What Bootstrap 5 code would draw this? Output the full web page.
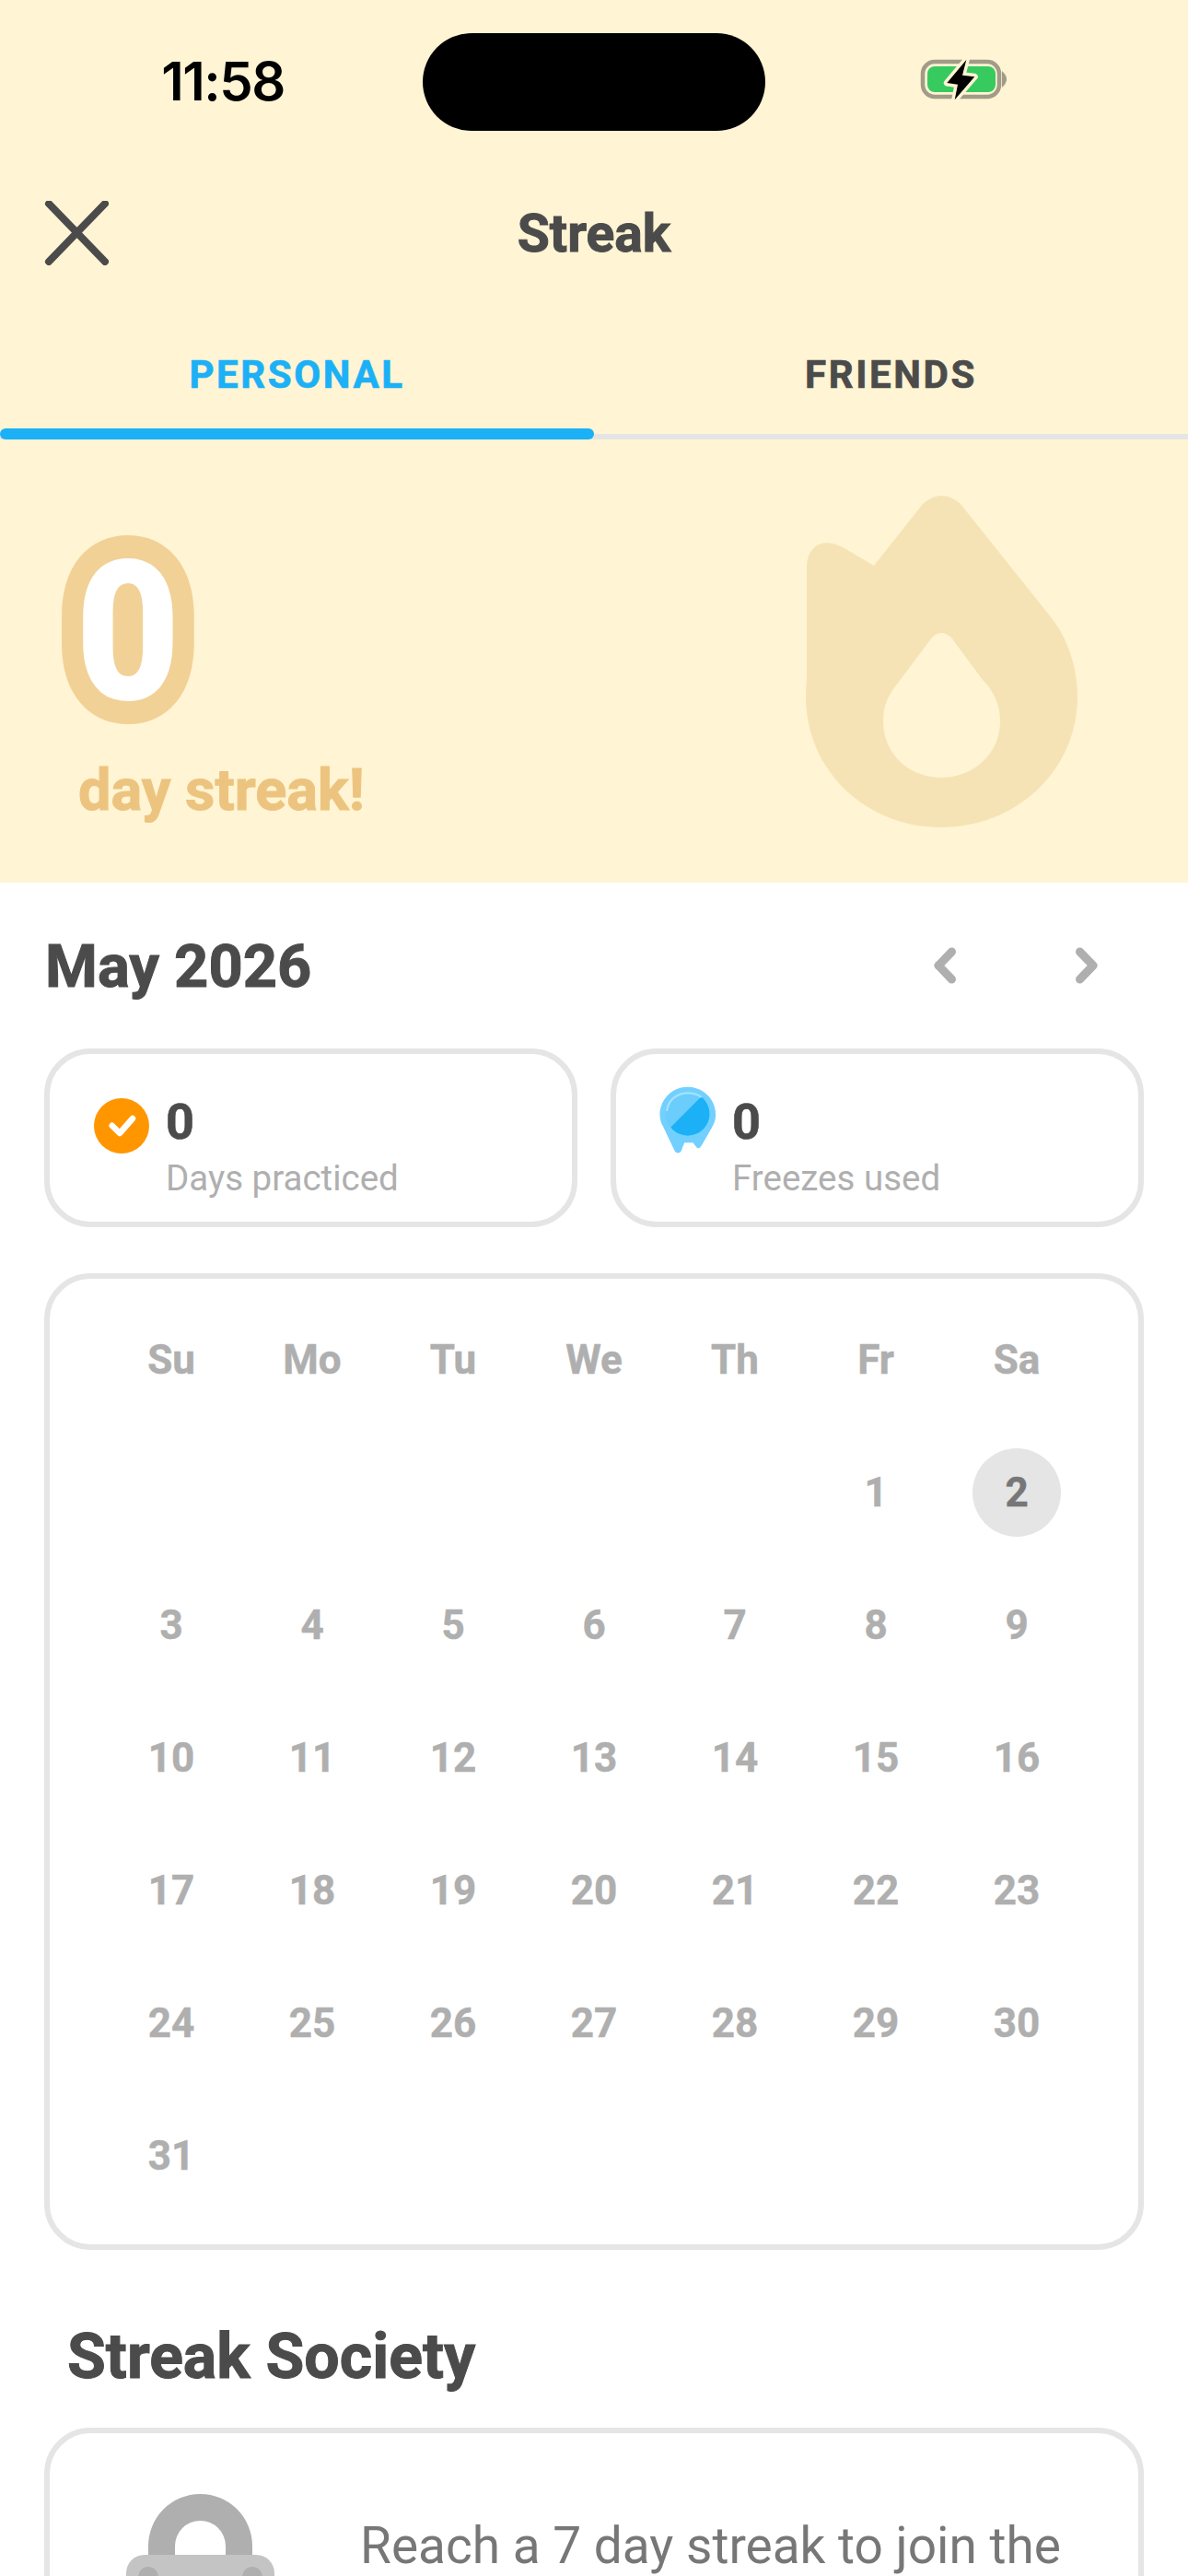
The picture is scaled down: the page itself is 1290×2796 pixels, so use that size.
<!DOCTYPE html>
<html lang="en">
<head>
<meta charset="utf-8">
<title>Streak</title>
<link href="https://cdn.jsdelivr.net/npm/bootstrap@5.3.0/dist/css/bootstrap.min.css" rel="stylesheet">
<style>
html,body{margin:0;background:#fff}
.phone{width:1290px;height:2796px;overflow:hidden;font-family:Roboto,"Liberation Sans",sans-serif;color:#4b4b4b}
.head-zone{background:#fff4d3;height:958px}
.status-row{height:178px;padding-top:36px}
.time-box{width:459px;height:106px;font-family:Inter,sans-serif;font-weight:600;font-size:58px;letter-spacing:-1.5px;color:#000;padding-bottom:2px}
.time-box span{margin-left:25px}
.notch{width:372px;height:106px;border-radius:53px;background:#000}
.batt-box{padding-left:167px;padding-top:26px}
.title-row{height:150px;padding-left:48px}
.title-row svg{margin-right:-118px}
.title-text{font-weight:700;font-size:57px;line-height:1;-webkit-text-stroke:1px #4b4b4b}
.tabs-wrap{height:149px;border-bottom:6px solid #e5e5e5}
.tab-item{height:143px;font-weight:700;font-size:42px;letter-spacing:2.6px;padding-top:14px;color:#4b4b4b;position:relative;-webkit-text-stroke:.7px currentColor}
.tab-on{color:#1cb0f6}
.tab-on::after{content:"";position:absolute;left:0;right:0;bottom:-6px;height:12px;background:#1cb0f6;border-radius:6px}
.hero{height:481px}
.hero-left{width:870px}
.zero-wrap{padding-left:82px;margin-top:105px;height:212px}
.big-zero{display:inline-block;font-weight:900;font-size:211px;line-height:1;color:#fff;-webkit-text-stroke:50px #f1d196;paint-order:stroke fill;transform:scaleX(.93);transform-origin:left center}
.day-label{font-weight:700;font-size:63px;line-height:1;color:#ecc47f;padding-left:85px;margin-top:32px;-webkit-text-stroke:1px #ecc47f}
.flame{margin-top:54px}
.month-row{padding:56px 48px 0 48px;height:180px}
.month-text{font-weight:700;font-size:65px;line-height:70px;margin-left:1px;-webkit-text-stroke:1px #4b4b4b}
.chev-pair{gap:130px;margin-right:50px}
.stat-row{gap:36px;padding:0 48px;margin-bottom:50px}
.stat-card{flex:1 1 0;height:194px;border:6px solid #e5e5e5;border-radius:50px;padding:44px 0 0 48px;background:#fff}
.stat-icon{width:78px;padding-top:4px}
.stat-num{font-weight:700;font-size:54px;line-height:60px;-webkit-text-stroke:.6px #4b4b4b}
.stat-lab{font-size:38.5px;line-height:50px;color:#afafaf;margin-top:6px}
.cal-card{margin:0 48px;height:1060px;border:6px solid #e5e5e5;border-radius:50px;padding:16px 55.5px 0;background:#fff}
.cal-grid{display:grid;grid-template-columns:repeat(7,153px);grid-auto-rows:144px}
.cal-cell{font-weight:700;font-size:44px;color:#afafaf;-webkit-text-stroke:.5px currentColor}
.cal-today{width:96px;height:96px;border-radius:50%;background:#e5e5e5;color:#777}
.society-title{font-weight:700;font-size:68px;line-height:70px;padding-left:73px;margin-top:81px;margin-bottom:42px;-webkit-text-stroke:1px #4b4b4b}
.soc-card{margin:0 48px;height:400px;border:6px solid #e5e5e5;border-radius:50px;padding:66px 0 0 83px;background:#fff}
.soc-text{font-size:55px;line-height:46px;color:#777;margin-left:91px;margin-top:33px;white-space:nowrap}
</style>
</head>
<body>
<div class="phone">
  <div class="head-zone">
    <div class="status-row d-flex align-items-start">
      <div class="time-box d-flex align-items-center justify-content-center"><span>11:58</span></div>
      <div class="notch"></div>
      <div class="batt-box">
        <svg width="98" height="50" viewBox="38 22 98 50">
          <rect x="42" y="27" width="83" height="38" rx="13" fill="none" stroke="#a19b88" stroke-width="4.500"/>
          <rect x="47" y="32" width="74" height="28" rx="8" fill="#37cb5f"/>
          <path d="M128 37q10 9 0 18z" fill="#a19b88"/>
          <path d="M89.300 25 68.300 50 80 51.700 76.700 68.300 98.300 43.300 85 41.700Z" fill="#000" stroke="#fff4d3" stroke-width="7" stroke-linejoin="round" paint-order="stroke fill"/>
        </svg>
      </div>
    </div>
    <div class="title-row d-flex align-items-center">
      <svg width="70" height="70" viewBox="0 0 70 70"><path d="M5 3 66 66M66 3 5 66" stroke="#4b4b4b" stroke-width="8" stroke-linecap="round" fill="none"/></svg>
      <div class="title-text flex-grow-1 text-center">Streak</div>
    </div>
    <div class="tabs-wrap d-flex">
      <div class="tab-item tab-on w-50 d-flex align-items-center justify-content-center">PERSONAL</div>
      <div class="tab-item w-50 d-flex align-items-center justify-content-center">FRIENDS</div>
    </div>
    <div class="hero d-flex">
      <div class="hero-left">
        <div class="zero-wrap"><span class="big-zero">0</span></div>
        <div class="day-label">day streak!</div>
      </div>
      <svg class="flame" width="305" height="372" viewBox="870 530 305 372">
        <path fill-rule="evenodd" fill="#f6e3b5" d="M1002 546Q1022 528 1043 546L1142 670C1160 693 1170 725 1170 755 1170 835 1104 897 1022 897 940 897 875 835 875 755Q875 745 876 735L876 615C876 595 890 580 915 593L949 613ZM1012 691Q1022 681 1033 691L1067 737C1080 750 1086 765 1086 782 1086 816 1058 843 1022 843 986 843 959 816 959 782 959 765 964 756 970 747Z"/>
      </svg>
    </div>
  </div>

  <div class="month-row d-flex justify-content-between align-items-start">
    <div class="month-text">May 2026</div>
    <div class="chev-pair d-flex" style="padding-top:14px">
      <svg width="24" height="40" viewBox="0 0 24 40"><path d="M19.500 5 5 20 19.500 35" fill="none" stroke="#afafaf" stroke-width="9" stroke-linecap="round" stroke-linejoin="round"/></svg>
      <svg width="24" height="40" viewBox="0 0 24 40"><path d="M4.500 5 19 20 4.500 35" fill="none" stroke="#afafaf" stroke-width="9" stroke-linecap="round" stroke-linejoin="round"/></svg>
    </div>
  </div>

  <div class="stat-row d-flex">
    <div class="stat-card d-flex">
      <div class="stat-icon">
        <svg width="60" height="60" viewBox="0 0 60 60"><circle cx="30" cy="30" r="30" fill="#ff9600"/><path d="M19.700 29.700 28 38 42 22" fill="none" stroke="#fff" stroke-width="6.500" stroke-linecap="round" stroke-linejoin="round"/></svg>
      </div>
      <div><div class="stat-num">0</div><div class="stat-lab">Days practiced</div></div>
    </div>
    <div class="stat-card d-flex">
      <div class="stat-icon">
        <svg style="margin:-14px 0 0 -4px" width="67" height="75" viewBox="160 145 200 225">
          <path fill="#72d0ff" d="M261 150C311 150 352 190 352 241 352 258 346 272 338 285L304 344C300 352 291 352 287 344L278 332H250L240 358C236 368 222 368 218 358L180 278C174 268 170 255 170 241 170 190 211 150 261 150Z"/>
          <circle cx="261" cy="238" r="71" fill="#1cb0f6"/>
          <path fill="#6acdfb" d="M205 282A71 71 0 0 1 305 182Z"/>
          <path d="M193 226C199 191 226 170 262 170 280 170 292 174 303 182" fill="none" stroke="#a5e2ff" stroke-width="7" stroke-linecap="round"/>
        </svg>
      </div>
      <div><div class="stat-num">0</div><div class="stat-lab">Freezes used</div></div>
    </div>
  </div>

  <div class="cal-card">
    <div class="cal-grid">
      <div class="cal-cell d-flex align-items-center justify-content-center">Su</div>
      <div class="cal-cell d-flex align-items-center justify-content-center">Mo</div>
      <div class="cal-cell d-flex align-items-center justify-content-center">Tu</div>
      <div class="cal-cell d-flex align-items-center justify-content-center">We</div>
      <div class="cal-cell d-flex align-items-center justify-content-center">Th</div>
      <div class="cal-cell d-flex align-items-center justify-content-center">Fr</div>
      <div class="cal-cell d-flex align-items-center justify-content-center">Sa</div>
      <div></div><div></div><div></div><div></div><div></div>
      <div class="cal-cell d-flex align-items-center justify-content-center">1</div>
      <div class="cal-cell d-flex align-items-center justify-content-center"><div class="cal-today d-flex align-items-center justify-content-center">2</div></div>
      <div class="cal-cell d-flex align-items-center justify-content-center">3</div>
      <div class="cal-cell d-flex align-items-center justify-content-center">4</div>
      <div class="cal-cell d-flex align-items-center justify-content-center">5</div>
      <div class="cal-cell d-flex align-items-center justify-content-center">6</div>
      <div class="cal-cell d-flex align-items-center justify-content-center">7</div>
      <div class="cal-cell d-flex align-items-center justify-content-center">8</div>
      <div class="cal-cell d-flex align-items-center justify-content-center">9</div>
      <div class="cal-cell d-flex align-items-center justify-content-center">10</div>
      <div class="cal-cell d-flex align-items-center justify-content-center">11</div>
      <div class="cal-cell d-flex align-items-center justify-content-center">12</div>
      <div class="cal-cell d-flex align-items-center justify-content-center">13</div>
      <div class="cal-cell d-flex align-items-center justify-content-center">14</div>
      <div class="cal-cell d-flex align-items-center justify-content-center">15</div>
      <div class="cal-cell d-flex align-items-center justify-content-center">16</div>
      <div class="cal-cell d-flex align-items-center justify-content-center">17</div>
      <div class="cal-cell d-flex align-items-center justify-content-center">18</div>
      <div class="cal-cell d-flex align-items-center justify-content-center">19</div>
      <div class="cal-cell d-flex align-items-center justify-content-center">20</div>
      <div class="cal-cell d-flex align-items-center justify-content-center">21</div>
      <div class="cal-cell d-flex align-items-center justify-content-center">22</div>
      <div class="cal-cell d-flex align-items-center justify-content-center">23</div>
      <div class="cal-cell d-flex align-items-center justify-content-center">24</div>
      <div class="cal-cell d-flex align-items-center justify-content-center">25</div>
      <div class="cal-cell d-flex align-items-center justify-content-center">26</div>
      <div class="cal-cell d-flex align-items-center justify-content-center">27</div>
      <div class="cal-cell d-flex align-items-center justify-content-center">28</div>
      <div class="cal-cell d-flex align-items-center justify-content-center">29</div>
      <div class="cal-cell d-flex align-items-center justify-content-center">30</div>
      <div class="cal-cell d-flex align-items-center justify-content-center">31</div>
    </div>
  </div>

  <div class="society-title">Streak Society</div>
  <div class="soc-card d-flex align-items-start">
    <svg width="163" height="90" viewBox="0 0 163 90" class="flex-shrink-0">
      <path d="M24 66V56.500A56.500 56.500 0 0 1 137 56.500V66H108V56.500A27.500 27.500 0 0 0 53 56.500V66Z" fill="#afafaf"/>
      <rect x="0" y="66" width="161" height="90" rx="20" fill="#c4c4c4"/>
      <circle cx="24" cy="90" r="11" fill="#afafaf"/><circle cx="137" cy="90" r="11" fill="#afafaf"/>
    </svg>
    <div class="soc-text">Reach a 7 day streak to join the</div>
  </div>
</div>
<script src="https://cdn.jsdelivr.net/npm/bootstrap@5.3.0/dist/js/bootstrap.bundle.min.js"></script>
</body>
</html>
